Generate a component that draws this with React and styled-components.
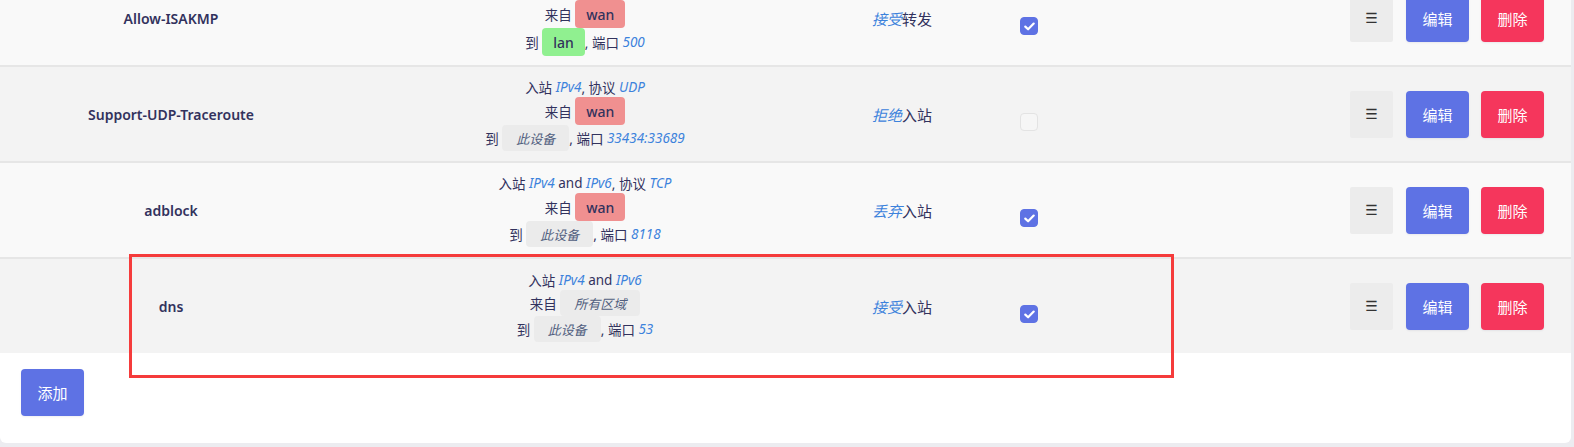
import React from "react";
import styled, { createGlobalStyle } from "styled-components";

const GlobalStyle = createGlobalStyle`
  html, body {
    margin: 0;
    padding: 0;
    background: #ececf0;
    overflow: hidden;
  }
  body {
    font-family: "Noto Sans", "Noto Sans CJK SC", sans-serif;
    color: #32325d;
  }
`;

const Card = styled.div`
  position: relative;
  margin: -31px 3px 0 0;
  background: #fff;
  border-radius: 0 0 6px 6px;
  overflow: hidden;
`;

const Row = styled.div`
  display: grid;
  grid-template-columns: 342px 486px 148px 106px 1fr;
  align-items: center;
  height: 94px;
  border-top: 2px solid #e6e6e6;
  background: ${(p) => (p.$odd ? "#f9f9f9" : "#f3f3f3")};

  &:last-of-type {
    height: 95px;
  }
`;

const NameCell = styled.div`
  text-align: center;
  font-size: 14px;
  font-weight: 600;
  color: #32325d;
`;

const MatchCell = styled.div`
  display: flex;
  flex-direction: column;
  align-items: center;
  font-size: 13.5px;
  color: #32325d;
`;

const Line = styled.div`
  display: flex;
  align-items: center;
  justify-content: center;
  white-space: pre;
  min-height: 19px;
`;

const Em = styled.em`
  color: #3c82dc;
  font-style: italic;
`;

const ZoneBadge = styled.span`
  display: inline-flex;
  align-items: center;
  height: 28px;
  padding: 0 11px;
  border-radius: 4px;
  font-size: 14px;
  font-weight: 500;
  color: #32325d;
  background: ${(p) => p.$color};
`;

const GreyBadge = styled.span`
  display: inline-flex;
  align-items: center;
  height: 26px;
  padding: 0 14px;
  border-radius: 4px;
  font-size: 13px;
  font-style: italic;
  color: #525f7f;
  background: #ebebeb;
`;

const ActionCell = styled.div`
  text-align: center;
  font-size: 15px;
  color: #32325d;
`;

const CheckCell = styled.div`
  display: flex;
  justify-content: center;
  padding-top: 16px;
`;

const Check = styled.span`
  display: inline-flex;
  align-items: center;
  justify-content: center;
  width: 18px;
  height: 18px;
  box-sizing: border-box;
  border-radius: 4px;
  background: ${(p) => (p.$on ? "#5e72e4" : "#f6f6f6")};
  border: 1px solid ${(p) => (p.$on ? "#5e72e4" : "#e3e3e3")};
`;

const Buttons = styled.div`
  display: flex;
  justify-content: flex-end;
  gap: 12px;
  padding-right: 27px;
`;

const Btn = styled.button`
  height: 47px;
  min-width: 63px;
  padding: 0 14px;
  border: none;
  border-radius: 4px;
  font-family: "Noto Sans CJK SC", "Noto Sans", sans-serif;
  font-size: 15px;
  color: #fff;
  background: ${(p) => p.$bg};
  box-shadow: 0 1px 2px rgba(50, 50, 93, 0.08);
`;

const SortBtn = styled.button`
  width: 43px;
  height: 47px;
  border: none;
  border-radius: 2px;
  background: #ececec;
  color: #333;
  font-family: "DejaVu Sans", sans-serif;
  font-size: 14px;
  margin-right: 1px;
`;

const Footer = styled.div`
  padding: 16px 21px 27px;
`;

const Highlight = styled.div`
  position: absolute;
  left: 129px;
  top: 285px;
  width: 1045px;
  height: 124px;
  box-sizing: border-box;
  border: 3px solid #f53b3b;
  pointer-events: none;
`;

const zoneColors = { wan: "#f09090", lan: "#90f090" };

const rules = [
  { name: "Allow-ISAKMP", dir: "转发", fam: ["IPv4"], proto: "UDP", from: "wan", to: "lan", port: "500", verb: "接受", target: "转发", on: true },
  { name: "Support-UDP-Traceroute", dir: "入站", fam: ["IPv4"], proto: "UDP", from: "wan", to: null, port: "33434:33689", verb: "拒绝", target: "入站", on: false },
  { name: "adblock", dir: "入站", fam: ["IPv4", "IPv6"], proto: "TCP", from: "wan", to: null, port: "8118", verb: "丢弃", target: "入站", on: true },
  { name: "dns", dir: "入站", fam: ["IPv4", "IPv6"], proto: null, from: null, to: null, port: "53", verb: "接受", target: "入站", on: true },
];

function Zone({ zone, fallback }) {
  if (!zone) return <GreyBadge>{fallback}</GreyBadge>;
  return <ZoneBadge $color={zoneColors[zone]}>{zone}</ZoneBadge>;
}

function RuleRow({ rule, odd }) {
  return (
    <Row $odd={odd}>
      <NameCell>{rule.name}</NameCell>
      <MatchCell>
        <Line>
          {rule.dir + " "}
          {rule.fam.map((f, i) => (
            <React.Fragment key={f}>
              {i > 0 && " and "}
              <Em>{f}</Em>
            </React.Fragment>
          ))}
          {rule.proto && (
            <>
              {", 协议 "}
              <Em>{rule.proto}</Em>
            </>
          )}
        </Line>
        <Line>
          {"来自 "}
          <Zone zone={rule.from} fallback="所有区域" />
        </Line>
        <Line>
          {"到 "}
          <Zone zone={rule.to} fallback="此设备" />
          {", 端口 "}
          <Em>{rule.port}</Em>
        </Line>
      </MatchCell>
      <ActionCell>
        <Em>{rule.verb}</Em>
        {rule.target}
      </ActionCell>
      <CheckCell>
        <Check $on={rule.on}>
          {rule.on && (
            <svg width="11" height="9" viewBox="0 0 11 9">
              <path d="M1.3 4.6 L4.1 7.3 L9.7 1.6" fill="none" stroke="#fff" strokeWidth="2.2" strokeLinecap="round" strokeLinejoin="round" />
            </svg>
          )}
        </Check>
      </CheckCell>
      <Buttons>
        <SortBtn>☰</SortBtn>
        <Btn $bg="#5e72e4">编辑</Btn>
        <Btn $bg="#f5365c">删除</Btn>
      </Buttons>
    </Row>
  );
}

export default function App() {
  return (
    <>
      <GlobalStyle />
      <Card>
        {rules.map((r, i) => (
          <RuleRow key={r.name} rule={r} odd={i % 2 === 0} />
        ))}
        <Footer>
          <Btn $bg="#5e72e4">添加</Btn>
        </Footer>
        <Highlight />
      </Card>
    </>
  );
}
